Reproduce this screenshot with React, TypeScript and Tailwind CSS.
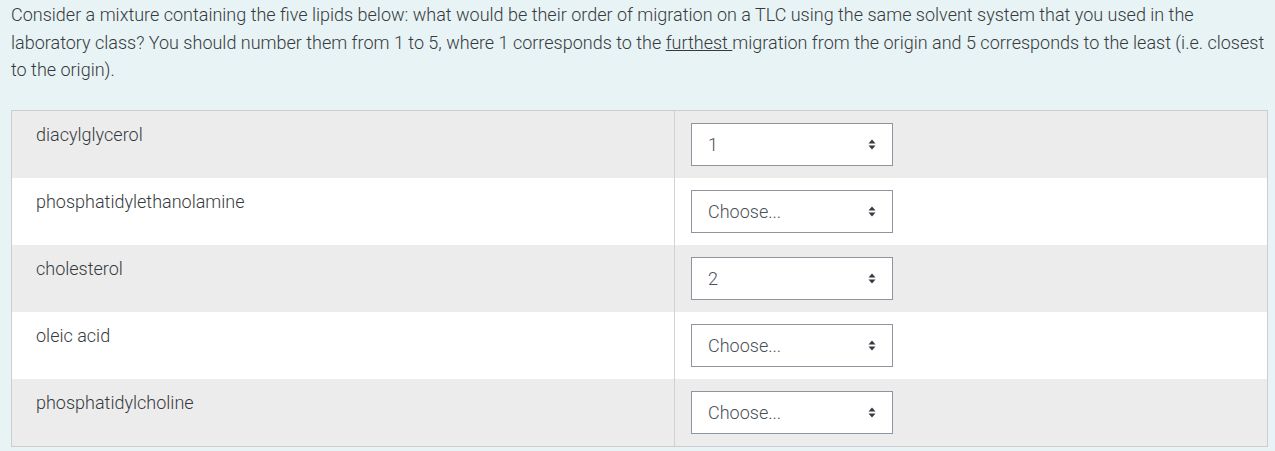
const rows: { label: string; value: string }[] = [
  { label: 'diacylglycerol', value: '1' },
  { label: 'phosphatidylethanolamine', value: 'Choose...' },
  { label: 'cholesterol', value: '2' },
  { label: 'oleic acid', value: 'Choose...' },
  { label: 'phosphatidylcholine', value: 'Choose...' },
];

function UpDown() {
  return (
    <svg width="8" height="11" viewBox="0 0 8 11" className="shrink-0">
      <path d="M4 0.5 L7.5 4.5 H0.5 Z" fill="#343a40" />
      <path d="M4 10.5 L7.5 6.5 H0.5 Z" fill="#343a40" />
    </svg>
  );
}

export default function App() {
  return (
    <div
      className="min-h-[451px] bg-[#e7f3f5] pl-[11px] pr-[7px] pt-[1px] font-light text-[#373a3c]"
      style={{ fontFamily: 'Roboto, "Liberation Sans", sans-serif' }}
    >
      <p className="text-[18px] leading-[27.5px]">
        Consider a mixture containing the five lipids below: what would be their order of migration on a TLC using
        the same solvent system that you used in the laboratory class? You should number them from 1 to 5, where 1
        corresponds to the <u>furthest </u>migration from the origin and 5 corresponds to the least (i.e. closest to
        the origin).
      </p>

      <div className="mt-[26px] border border-[#cdcdcd]">
        {rows.map((r, i) => (
          <div
            key={r.label}
            className={`grid grid-cols-[663px_1fr] h-[67px] ${i % 2 === 0 ? 'bg-[#ececec]' : 'bg-white'}`}
          >
            <div className="border-r border-[#d2d2d2] pl-[24px] pt-[11px] text-[18px] leading-[26px]">
              {r.label}
            </div>
            <div className="pl-[16px] pt-[12px]">
              <div className="flex h-[43px] w-[202px] items-center justify-between border border-[#8f959e] bg-white pl-[16px] pr-[16px] text-[18px] text-[#495057]">
                <span>{r.value}</span>
                <UpDown />
              </div>
            </div>
          </div>
        ))}
      </div>
    </div>
  );
}
